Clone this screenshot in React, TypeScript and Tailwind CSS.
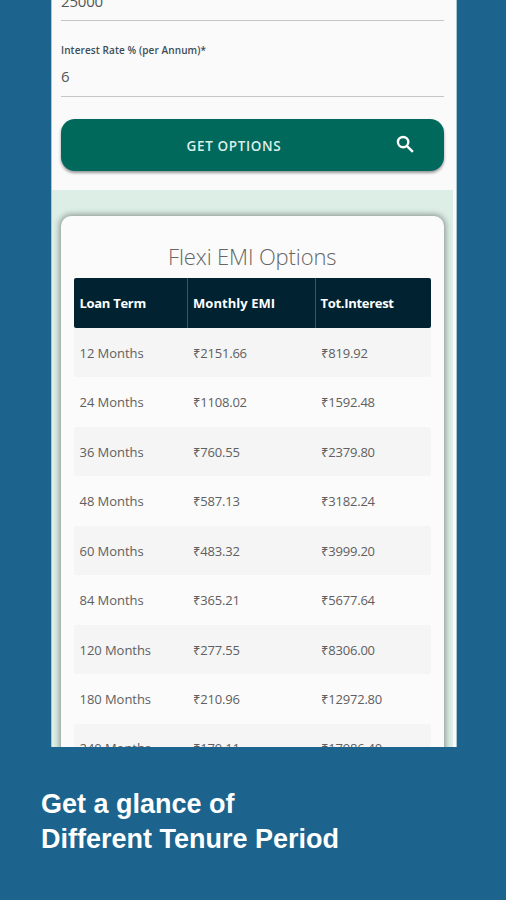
type Option = {
  term: string;
  emi: string;
  interest: string;
};

const OPTIONS: Option[] = [
  { term: "12 Months", emi: "₹2151.66", interest: "₹819.92" },
  { term: "24 Months", emi: "₹1108.02", interest: "₹1592.48" },
  { term: "36 Months", emi: "₹760.55", interest: "₹2379.80" },
  { term: "48 Months", emi: "₹587.13", interest: "₹3182.24" },
  { term: "60 Months", emi: "₹483.32", interest: "₹3999.20" },
  { term: "84 Months", emi: "₹365.21", interest: "₹5677.64" },
  { term: "120 Months", emi: "₹277.55", interest: "₹8306.00" },
  { term: "180 Months", emi: "₹210.96", interest: "₹12972.80" },
  { term: "240 Months", emi: "₹179.11", interest: "₹17986.40" },
];

function SearchIcon() {
  return (
    <svg
      viewBox="0 0 24 24"
      className="mr-[27px] mb-px ml-auto size-[23px] fill-none stroke-white [stroke-width:2.5]"
      aria-hidden="true"
    >
      <circle cx="9.5" cy="9.5" r="5.4" />
      <path d="M13.6 13.6l6.1 6.1" />
    </svg>
  );
}

function OptionRow({ option }: { option: Option }) {
  return (
    <div className="grid h-[49.55px] grid-cols-[114px_128px_1fr] items-center rounded-xs pt-[2px] text-[13px] tracking-[-0.05px] text-[#606060] last:pt-0 odd:bg-[#f5f5f5]">
      <span className="pl-[5.5px]">{option.term}</span>
      <span className="pl-[5px] tracking-[-0.2px]">{option.emi}</span>
      <span className="pl-[5px] tracking-[-0.2px]">{option.interest}</span>
    </div>
  );
}

function OptionsTable() {
  return (
    <div>
      <div className="grid h-[49.5px] grid-cols-[114px_128px_1fr] items-center overflow-hidden rounded-xs bg-[#002231] text-[13px] font-bold tracking-[-0.3px] text-white">
        <span className="flex h-full items-center border-r border-[#3b5562] pt-[2px] pl-[5.5px]">Loan Term</span>
        <span className="flex h-full items-center border-r border-[#3b5562] pt-[2px] pl-[5px] tracking-[0.05px]">
          Monthly EMI
        </span>
        <span className="pt-[2px] pl-[4.5px]">Tot.Interest</span>
      </div>
      <div>
        {OPTIONS.map((option) => (
          <OptionRow key={option.term} option={option} />
        ))}
      </div>
    </div>
  );
}

export default function App() {
  return (
    <main className="h-[900px] w-[506px] overflow-hidden bg-[#1c648d] font-['Open_Sans','Noto_Sans',sans-serif]">
      <div className="ml-[51px] flex h-[747px] w-[405.5px] flex-col overflow-hidden border-x border-[#a9c4d3] bg-[#fafafa]">
        <section className="flex h-[190px] flex-none flex-col pr-[12px] pl-[9px]">
          <div className="flex h-[21px] items-end border-b border-[#c6c6c6] pb-[9px]">
            <p className="text-[15px] leading-5 tracking-[-0.2px] text-[#555]">25000</p>
          </div>
          <div className="h-[76px] border-b border-[#c6c6c6] pt-[22px]">
            <p className="text-[10px] leading-[14px] font-semibold tracking-[0.1px] text-[#3d4d56]">
              Interest Rate % (per Annum)*
            </p>
            <p className="mt-[9px] text-[15px] leading-5 text-[#555]">6</p>
          </div>
          <button className="mt-[21.5px] flex h-[52px] w-full items-center rounded-[14px] bg-[#00695c] text-white shadow-[0_2px_3px_rgba(0,0,0,0.4)]">
            <span className="mt-[3px] ml-[125.5px] text-[13.5px] font-semibold tracking-[0.65px] text-[#dcefeb]">
              GET OPTIONS
            </span>
            <SearchIcon />
          </button>
        </section>

        <section className="mr-[3px] flex-1 bg-[#dceee6] pt-[26px] pr-[9px] pl-[9px]">
          <div className="h-[640px] rounded-[10px] bg-[#fbfbfb] px-[13px] pt-[26px] shadow-[0_0_6px_1px_rgba(0,0,0,0.42)]">
            <h1 className="mb-[7px] text-center text-[22px] leading-[29px] font-light tracking-[-0.13px] text-[#666]">
              Flexi EMI Options
            </h1>
            <OptionsTable />
          </div>
        </section>
      </div>

      <p className="mt-[40px] ml-[41px] font-['Liberation_Sans',Arial,sans-serif] text-[27px] leading-[35px] font-bold text-white">
        Get a glance of
        <br />
        Different Tenure Period
      </p>
    </main>
  );
}
